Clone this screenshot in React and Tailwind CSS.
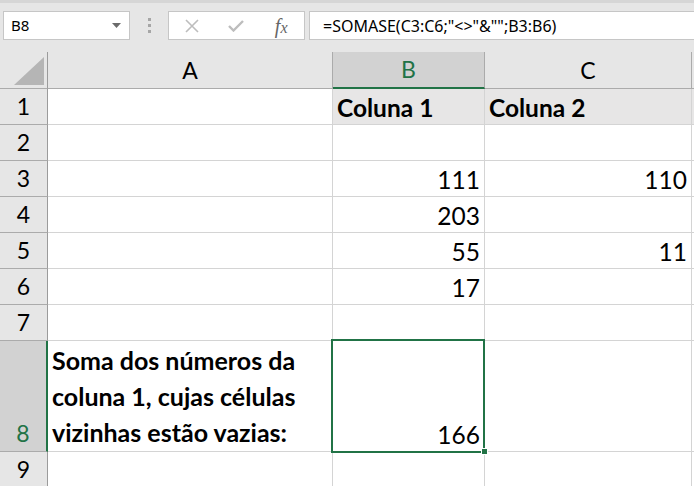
import React from 'react';

const cellFont = { fontFamily: 'Lato, "Open Sans", sans-serif' };
const uiFont = { fontFamily: '"Noto Sans", "Open Sans", sans-serif' };

const rows = [
    { n: '1', b: 'Coluna 1', c: 'Coluna 2', head: true },
    { n: '2', b: '', c: '' },
    { n: '3', b: '111', c: '110' },
    { n: '4', b: '203', c: '' },
    { n: '5', b: '55', c: '11' },
    { n: '6', b: '17', c: '' },
    { n: '7', b: '', c: '' },
];

const RowHead = ({ children, active, tall }) => (
    <div
        className={`flex items-end justify-center border-b ${
            active ? 'bg-[#d2d2d2] text-[#217346] border-r-2 border-r-[#217346]' : 'bg-[#e6e6e6] text-black border-r border-r-[#9b9b9b]'
        } border-b-[#ababab] text-[23px] leading-none pb-[6px] ${tall ? 'h-[111px]' : 'h-[36px]'}`}
    >
        {children}
    </div>
);

const Cell = ({ children, fill, bold, right, tall }) => (
    <div
        className={`flex items-end border-b border-r border-[#d4d4d4] px-[4px] pb-[4px] text-[24.5px] leading-none text-black ${
            fill ? 'bg-[#e7e6e6]' : 'bg-white'
        } ${bold ? 'font-bold' : ''} ${right ? 'justify-end' : ''} ${tall ? 'h-[111px]' : 'h-[36px]'}`}
    >
        {children}
    </div>
);

export default function App() {
    return (
        <div className="w-[694px] h-[486px] overflow-hidden bg-white select-none" style={cellFont}>
            {/* formula bar */}
            <div className="h-[52px] bg-[#e6e6e6] border-t-[3px] border-t-[#d6d6d6] flex items-start pt-[8px] pl-[3px]">
                <div className="w-[127px] h-[29px] bg-white border border-[#c6c6c6] flex items-center justify-between pl-[7px] pr-[8px]">
                    <span className="text-[15px] text-black" style={uiFont}>B8</span>
                    <svg width="9" height="5" viewBox="0 0 9 5"><path d="M0 0h9L4.5 5z" fill="#6b6b6b" /></svg>
                </div>
                <div className="w-[38px] h-[29px] flex flex-col items-center justify-center gap-[3px]">
                    <span className="w-[3px] h-[3px] bg-[#a6a6a6]" />
                    <span className="w-[3px] h-[3px] bg-[#a6a6a6]" />
                    <span className="w-[3px] h-[3px] bg-[#a6a6a6]" />
                </div>
                <div className="w-[137px] h-[29px] bg-white border border-[#c6c6c6] flex items-center">
                    <div className="w-[46px] flex justify-center">
                        <svg width="14" height="14" viewBox="0 0 14 14"><path d="M1 1l12 12M13 1L1 13" stroke="#bdbdbd" strokeWidth="1.6" /></svg>
                    </div>
                    <div className="w-[44px] flex justify-center">
                        <svg width="16" height="12" viewBox="0 0 16 12"><path d="M1 6l4.5 4.5L15 1" stroke="#bdbdbd" strokeWidth="2.4" fill="none" /></svg>
                    </div>
                    <div className="w-[46px] flex justify-center">
                        <span className="italic text-[20px] leading-none text-[#666666]" style={{ fontFamily: '"Liberation Serif", serif' }}>
                            f<span className="text-[16px]">x</span>
                        </span>
                    </div>
                </div>
                <div className="flex-1 ml-[4px] h-[29px] bg-white border border-[#c6c6c6] border-r-0 flex items-center pl-[13px]">
                    <span className="text-[16px] text-black" style={uiFont}>
                        =SOMASE(C3:C6;"&lt;&gt;"&amp;"";B3:B6)
                    </span>
                </div>
            </div>

            {/* grid */}
            <div className="grid grid-cols-[48px_285px_152px_207px_2px]">
                {/* column headers */}
                <div className="h-[37px] bg-[#e6e6e6] border-r border-b border-[#9b9b9b] border-b-[#ababab] flex items-end justify-end pr-[3px] pb-[3px]">
                    <svg width="30" height="28" viewBox="0 0 30 28"><path d="M30 0V28H0z" fill="#b5b5b5" /></svg>
                </div>
                <div className="h-[37px] bg-[#e6e6e6] border-r border-b border-[#ababab] flex items-center justify-center text-[23px] text-black">A</div>
                <div className="h-[37px] bg-[#d2d2d2] border-r border-[#ababab] border-b-2 border-b-[#217346] flex items-center justify-center text-[23px] text-[#217346]">B</div>
                <div className="h-[37px] bg-[#e6e6e6] border-r border-b border-[#ababab] flex items-center justify-center text-[23px] text-black">C</div>
                <div className="h-[37px] bg-[#e6e6e6] border-b border-[#ababab]" />

                {rows.map(r => (
                    <React.Fragment key={r.n}>
                        <RowHead>{r.n}</RowHead>
                        <Cell />
                        <Cell fill={r.head} bold={r.head} right={!r.head}>{r.b}</Cell>
                        <Cell fill={r.head} bold={r.head} right={!r.head}>{r.c}</Cell>
                        <div className={`h-[36px] ${r.head ? 'bg-[#e7e6e6]' : 'bg-white'} border-b border-[#d4d4d4]`} />
                    </React.Fragment>
                ))}

                {/* row 8 */}
                <RowHead active tall>8</RowHead>
                <div className="h-[111px] flex items-end bg-white border-b border-r border-[#d4d4d4] pl-[4px] pb-[1px] text-[25px] font-bold leading-[36px] text-black whitespace-nowrap">
                    <span>
                        Soma dos números da
                        <br />
                        coluna 1, cujas células
                        <br />
                        vizinhas estão vazias:
                    </span>
                </div>
                <div className="relative h-[111px] bg-white border-b border-r border-[#d4d4d4]">
                    <div className="absolute -left-[2px] -top-[2px] right-[-1px] bottom-[-2px] border-2 border-[#217346] flex items-end justify-end pr-[3px] pb-[4px] text-[24.5px] leading-none">
                        166
                    </div>
                    <div className="absolute right-[-4px] bottom-[-4px] w-[5px] h-[5px] bg-[#217346] border border-white box-content" />
                </div>
                <Cell tall />
                <div className="h-[111px] bg-white border-b border-[#d4d4d4]" />

                {/* row 9 */}
                <RowHead>9</RowHead>
                <Cell />
                <Cell />
                <Cell />
                <div className="h-[36px] bg-white" />
            </div>
        </div>
    );
}
